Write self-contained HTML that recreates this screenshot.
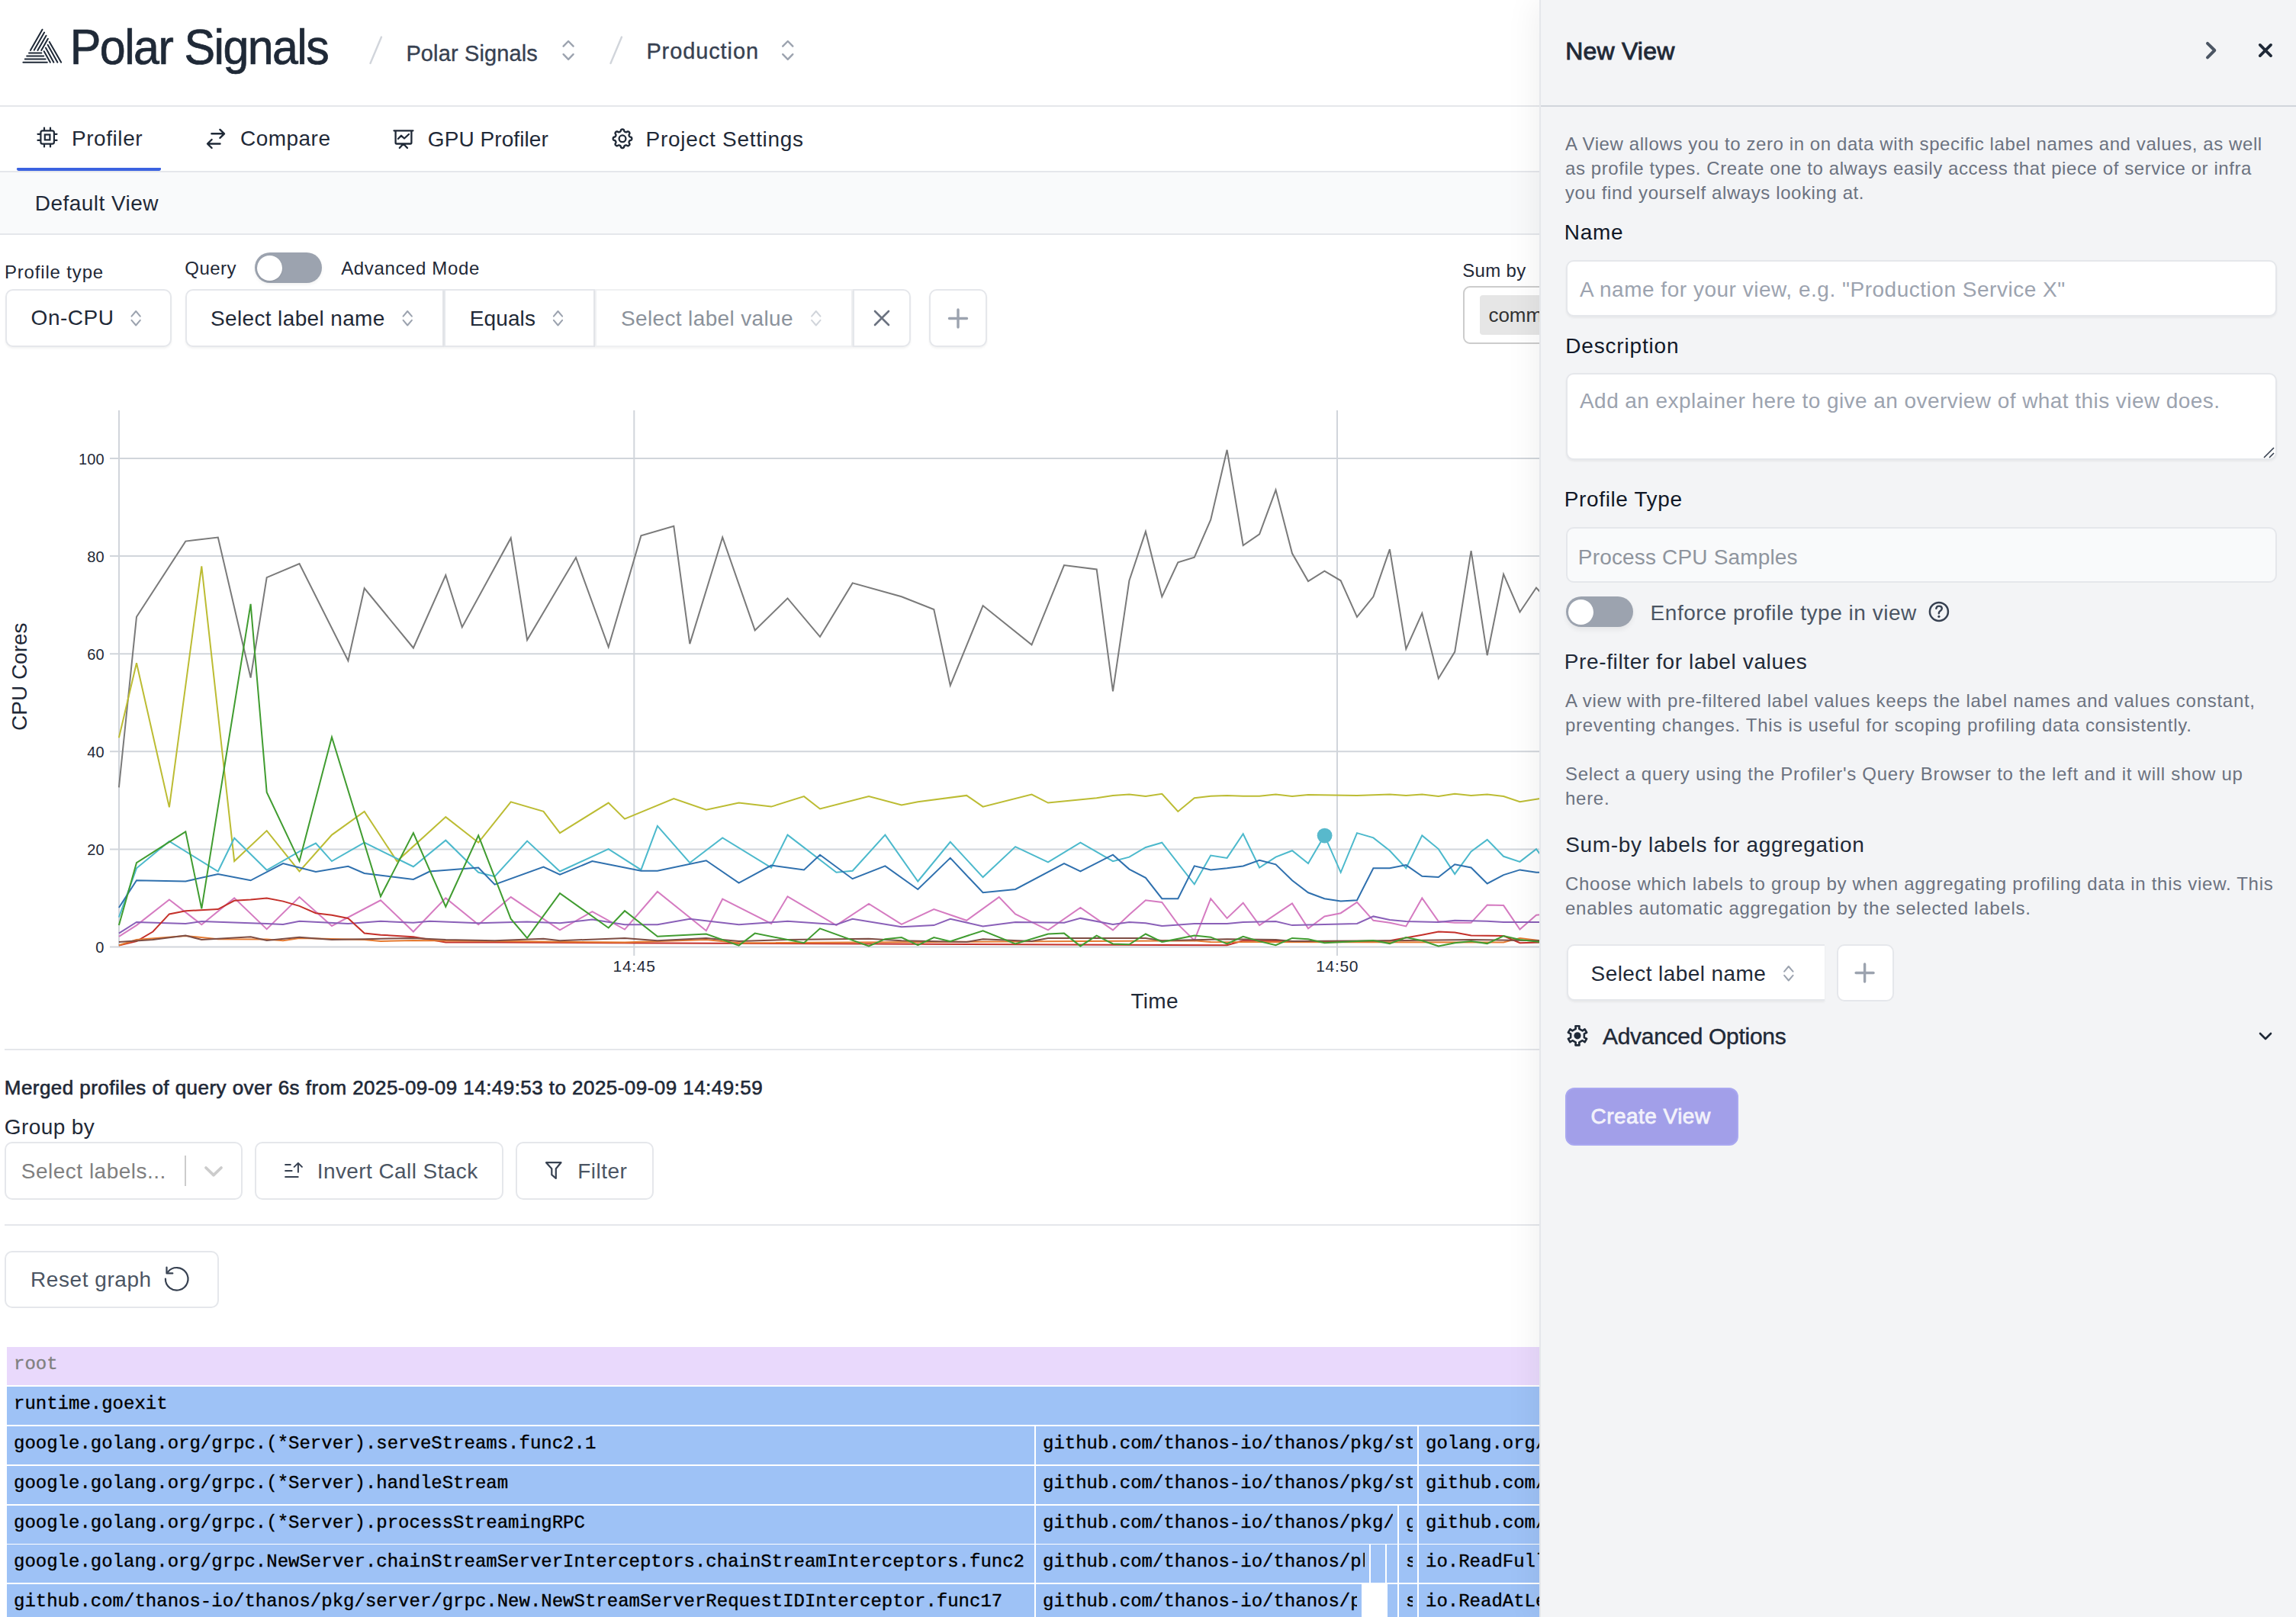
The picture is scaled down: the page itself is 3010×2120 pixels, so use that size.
<!DOCTYPE html>
<html><head><meta charset="utf-8">
<style>
html,body{margin:0;padding:0;}
body{width:3010px;height:2120px;position:relative;overflow:hidden;background:#fff;font-family:"Liberation Sans",sans-serif;color:#1f2937;}
.a{position:absolute;}
.t{position:absolute;white-space:nowrap;line-height:1;}
.bx{position:absolute;box-sizing:border-box;background:#fff;}
.fr{position:absolute;box-sizing:border-box;overflow:hidden;white-space:nowrap;font-family:"Liberation Mono",monospace;font-size:24px;line-height:45px;color:#000;padding-left:11px;}
svg{position:absolute;left:0;top:0;overflow:visible;}
</style></head><body>
<div id="main" class="a" style="left:0;top:0;width:2020px;height:2120px;overflow:hidden">
<div class="a" style="left:0px;top:138px;width:2020px;height:2px;background:#e5e7eb"></div>
<div class="t" style="left:91.8px;top:32.9px;font-size:61px;color:#1f2937;letter-spacing:-1.62px;-webkit-text-stroke:0.7px #1f2937;transform:scaleY(1.055);transform-origin:0 51.6px;">Polar Signals</div>
<div class="t" style="left:532.4px;top:55.6px;font-size:29px;color:#374151;letter-spacing:0.13px;-webkit-text-stroke:0.35px #374151;">Polar Signals</div>
<div class="t" style="left:847.4px;top:53.2px;font-size:29px;color:#374151;letter-spacing:0.89px;-webkit-text-stroke:0.35px #374151;">Production</div>
<div class="a" style="left:0px;top:224px;width:2020px;height:2px;background:#e5e7eb"></div>
<div class="a" style="left:22px;top:220px;width:189px;height:4px;background:#3b62e0;border-radius:2px 1px 4px 4px"></div>
<div class="t" style="left:94.0px;top:167.8px;font-size:28px;color:#1f2937;letter-spacing:0.56px;">Profiler</div>
<div class="t" style="left:315.0px;top:167.8px;font-size:28px;color:#1f2937;letter-spacing:0.47px;">Compare</div>
<div class="t" style="left:560.8px;top:169.1px;font-size:28px;color:#1f2937;letter-spacing:0.07px;">GPU Profiler</div>
<div class="t" style="left:846.6px;top:169.1px;font-size:28px;color:#1f2937;letter-spacing:0.69px;">Project Settings</div>
<div class="a" style="left:0px;top:226px;width:2020px;height:80px;background:#f9fafb"></div>
<div class="a" style="left:0px;top:306px;width:2020px;height:2px;background:#e5e7eb"></div>
<div class="t" style="left:45.8px;top:253.0px;font-size:28px;color:#1f2937;letter-spacing:0.45px;">Default View</div>
<div class="t" style="left:5.9px;top:345.3px;font-size:24px;color:#1f2937;letter-spacing:0.84px;">Profile type</div>
<div class="t" style="left:242.3px;top:339.5px;font-size:24px;color:#1f2937;letter-spacing:0.47px;">Query</div>
<div class="t" style="left:447.2px;top:340.2px;font-size:24px;color:#1f2937;letter-spacing:0.64px;">Advanced Mode</div>
<div class="a" style="left:334px;top:331px;width:88px;height:40px;background:#9ca3af;border-radius:20px;box-shadow:0 2px 4px rgba(0,0,0,0.06)"></div>
<div class="a" style="left:337px;top:334.5px;width:33px;height:33px;background:#fff;border-radius:50%;box-shadow:0 1px 2px rgba(0,0,0,0.1)"></div>
<div class="bx" style="left:7px;top:379px;width:218px;height:76px;border:2px solid #e5e7eb;border-radius:10px;box-shadow:0 2px 3px rgba(0,0,0,0.05);"></div>
<div class="bx" style="left:243px;top:379px;width:339px;height:76px;border:2px solid #e5e7eb;border-radius:10px 0 0 10px;box-shadow:0 2px 3px rgba(0,0,0,0.05);"></div>
<div class="bx" style="left:582px;top:379px;width:198px;height:76px;border:2px solid #e5e7eb;box-shadow:0 2px 3px rgba(0,0,0,0.05);"></div>
<div class="bx" style="left:780px;top:379px;width:338px;height:76px;border:2px solid #eff0f2;box-shadow:0 2px 3px rgba(0,0,0,0.05);"></div>
<div class="bx" style="left:1118px;top:379px;width:76px;height:76px;border:2px solid #e5e7eb;border-radius:0 10px 10px 0;box-shadow:0 2px 3px rgba(0,0,0,0.05);"></div>
<div class="bx" style="left:1218px;top:379px;width:76px;height:76px;border:2px solid #e5e7eb;border-radius:10px;box-shadow:0 2px 3px rgba(0,0,0,0.05);"></div>
<div class="t" style="left:40.6px;top:402.6px;font-size:28px;color:#1f2937;letter-spacing:0.52px;">On-CPU</div>
<div class="t" style="left:276.0px;top:403.6px;font-size:28px;color:#1f2937;letter-spacing:0.36px;">Select label name</div>
<div class="t" style="left:615.8px;top:403.6px;font-size:28px;color:#1f2937;letter-spacing:0.1px;">Equals</div>
<div class="t" style="left:814.0px;top:403.6px;font-size:28px;color:#8b929b;letter-spacing:0.36px;">Select label value</div>
<div class="t" style="left:1917.3px;top:343.4px;font-size:24px;color:#1f2937;letter-spacing:0.3px;">Sum by</div>
<div class="bx" style="left:1918px;top:375px;width:200px;height:76px;border:2px solid #cccccc;border-radius:9px;"></div>
<div class="a" style="left:1940px;top:387px;width:150px;height:52px;background:#e6e6e6;border-radius:4px"></div>
<div class="t" style="left:1951.4px;top:400.0px;font-size:26px;color:#333333;">comm</div>
<svg width="2020" height="2120" viewBox="0 0 2020 2120">
<line x1="144" y1="1241.5" x2="2020" y2="1241.5" stroke="#d1d5db" stroke-width="2"/>
<line x1="144" y1="1113.4" x2="2020" y2="1113.4" stroke="#d1d5db" stroke-width="2"/>
<line x1="144" y1="985.3" x2="2020" y2="985.3" stroke="#d1d5db" stroke-width="2"/>
<line x1="144" y1="857.2" x2="2020" y2="857.2" stroke="#d1d5db" stroke-width="2"/>
<line x1="144" y1="729.1" x2="2020" y2="729.1" stroke="#d1d5db" stroke-width="2"/>
<line x1="144" y1="601.0" x2="2020" y2="601.0" stroke="#d1d5db" stroke-width="2"/>
<line x1="156" y1="538" x2="156" y2="1242" stroke="#d1d5db" stroke-width="2"/>
<line x1="831.3" y1="538" x2="831.3" y2="1253" stroke="#d1d5db" stroke-width="2"/>
<line x1="1753" y1="538" x2="1753" y2="1253" stroke="#d1d5db" stroke-width="2"/>
<path d="M155.9,1032.4 L179.0,808.8 L243.3,709.6 L285.8,704.5 L328.6,888.6 L349.7,757.1 L392.5,739.0 L456.4,866.3 L477.7,771.3 L541.9,849.5 L584.3,754.1 L605.8,822.2 L669.7,705.4 L691.1,839.0 L755.0,731.0 L797.7,848.3 L840.4,702.4 L883.3,689.8 L904.3,844.1 L947.2,704.5 L989.7,826.4 L1032.5,784.4 L1075.0,834.8 L1117.7,764.4 L1181.9,782.3 L1224.3,799.1 L1245.8,898.7 L1288.6,794.0 L1352.5,845.3 L1395.0,741.1 L1437.7,746.5 L1459.0,906.3 L1480.4,761.3 L1501.9,696.9 L1523.3,782.3 L1544.3,737.3 L1565.8,730.6 L1587.2,681.4 L1608.6,589.8 L1629.7,715.0 L1651.1,700.3 L1672.5,642.3 L1694.0,725.5 L1715.0,762.1 L1736.4,748.6 L1757.7,761.3 L1779.0,808.8 L1800.4,782.3 L1821.9,720.1 L1843.3,850.8 L1864.3,804.1 L1885.8,889.5 L1907.2,854.6 L1928.6,722.2 L1949.7,859.2 L1971.1,752.8 L1992.5,802.5 L2014.0,770.5 L2019.0,776.0" fill="none" stroke="#7a7a7a" stroke-width="2.0" stroke-linejoin="miter"/>
<path d="M155.9,967.2 L179.0,869.3 L221.9,1058.4 L264.3,742.3 L307.2,1129.1 L349.7,1089.1 L392.5,1142.5 L435.0,1094.6 L477.7,1063.9 L520.4,1129.1 L584.3,1071.1 L627.2,1104.7 L669.7,1051.3 L712.5,1063.9 L734.0,1092.1 L797.7,1052.6 L819.0,1073.6 L883.3,1047.1 L925.8,1061.8 L968.6,1052.6 L1011.1,1057.6 L1054.0,1044.1 L1075.0,1060.5 L1139.0,1044.1 L1181.9,1055.5 L1203.3,1051.3 L1267.2,1042.9 L1288.6,1057.6 L1352.5,1041.6 L1374.0,1052.6 L1437.6,1046.3 L1459.0,1042.9 L1480.4,1041.6 L1501.9,1044.1 L1523.3,1040.8 L1544.3,1063.9 L1565.8,1046.3 L1587.2,1043.7 L1608.6,1042.9 L1629.7,1043.7 L1651.1,1043.7 L1672.5,1041.6 L1694.0,1044.1 L1715.0,1042.0 L1779.0,1042.9 L1821.9,1041.6 L1843.3,1042.9 L1864.3,1041.6 L1885.8,1044.1 L1907.2,1040.8 L1928.6,1042.9 L1949.7,1041.6 L1971.1,1044.1 L1992.5,1051.3 L2019.0,1047.1" fill="none" stroke="#bcbc33" stroke-width="2.0" stroke-linejoin="miter"/>
<path d="M155.9,1202.6 L179.0,1138.3 L221.9,1103.0 L285.8,1142.5 L307.2,1098.8 L349.7,1140.8 L392.5,1116.4 L414.0,1105.5 L435.0,1129.1 L477.7,1104.7 L541.9,1136.2 L584.3,1101.7 L627.2,1143.8 L648.6,1149.2 L691.1,1102.6 L734.0,1142.5 L797.7,1113.1 L840.4,1140.4 L861.9,1082.8 L904.3,1131.2 L947.2,1098.4 L1011.1,1137.5 L1032.5,1094.6 L1096.4,1143.8 L1117.7,1141.7 L1160.4,1094.6 L1203.3,1155.5 L1245.8,1103.8 L1288.6,1150.1 L1331.1,1110.1 L1374.0,1130.3 L1416.4,1104.7 L1459.0,1129.1 L1480.4,1123.6 L1501.9,1111.0 L1523.3,1104.7 L1565.8,1159.3 L1587.2,1121.5 L1608.6,1124.9 L1629.7,1093.3 L1651.1,1137.5 L1672.5,1123.6 L1694.0,1115.2 L1715.0,1132.0 L1736.4,1095.4 L1757.7,1143.8 L1779.0,1092.1 L1800.4,1098.4 L1821.9,1115.2 L1843.3,1138.3 L1864.3,1095.4 L1885.8,1113.1 L1907.2,1145.9 L1928.6,1116.4 L1949.7,1100.9 L1971.1,1122.8 L1992.5,1129.9 L2014.0,1113.1 L2019.0,1119.8" fill="none" stroke="#4cb9cc" stroke-width="2.0" stroke-linejoin="miter"/>
<path d="M155.9,1190.0 L179.0,1154.3 L243.3,1155.5 L285.8,1145.9 L328.6,1154.3 L371.1,1132.0 L414.0,1142.9 L456.4,1135.8 L477.6,1145.0 L541.9,1153.0 L563.3,1142.5 L627.2,1137.5 L648.6,1159.7 L712.5,1136.6 L734.0,1146.7 L776.4,1129.1 L840.4,1141.7 L861.9,1141.7 L925.8,1128.2 L968.6,1157.6 L1011.1,1134.5 L1054.0,1140.4 L1075.0,1120.7 L1117.6,1152.2 L1160.4,1135.4 L1203.3,1166.0 L1245.8,1124.9 L1288.6,1170.3 L1331.1,1166.0 L1395.0,1132.0 L1416.4,1142.5 L1459.0,1120.7 L1480.4,1139.6 L1501.9,1150.9 L1523.3,1178.2 L1544.3,1178.2 L1565.8,1135.4 L1587.2,1140.4 L1608.6,1138.3 L1629.7,1135.4 L1651.1,1127.8 L1672.5,1133.3 L1694.0,1154.3 L1715.0,1170.3 L1736.4,1178.2 L1757.6,1181.6 L1779.0,1180.3 L1800.4,1138.3 L1821.9,1138.3 L1843.3,1134.1 L1864.3,1148.8 L1885.8,1150.1 L1907.2,1133.3 L1928.6,1137.5 L1949.7,1158.5 L1971.1,1147.1 L1992.5,1140.4 L2014.0,1143.8 L2019.0,1143.8" fill="none" stroke="#2f70ae" stroke-width="2.0" stroke-linejoin="miter"/>
<path d="M155.9,1227.8 L179.0,1213.1 L221.9,1179.5 L264.3,1212.3 L307.2,1177.4 L349.7,1218.2 L392.5,1176.1 L435.0,1214.0 L499.0,1180.3 L541.9,1221.5 L584.3,1177.4 L627.2,1212.3 L669.7,1176.1 L734.0,1219.4 L776.4,1195.1 L819.0,1218.6 L861.9,1169.0 L925.8,1220.3 L947.2,1178.7 L1011.1,1211.0 L1032.5,1175.3 L1096.4,1213.1 L1139.0,1185.0 L1181.9,1211.9 L1224.3,1192.1 L1267.2,1206.8 L1309.7,1176.1 L1331.1,1198.4 L1374.0,1219.4 L1416.4,1190.0 L1459.0,1219.4 L1480.4,1199.3 L1501.9,1180.3 L1523.3,1182.9 L1544.3,1211.9 L1565.8,1232.9 L1587.2,1178.2 L1608.6,1203.9 L1629.7,1183.7 L1651.1,1213.1 L1694.0,1184.5 L1715.0,1217.3 L1736.4,1201.4 L1757.6,1197.2 L1779.0,1182.9 L1800.4,1206.8 L1821.9,1209.8 L1843.3,1214.4 L1864.3,1177.4 L1885.8,1208.1 L1907.2,1209.8 L1928.6,1209.8 L1949.7,1186.6 L1971.1,1187.1 L1992.5,1218.6 L2014.0,1199.7 L2019.0,1199.3" fill="none" stroke="#d57bc1" stroke-width="2.0" stroke-linejoin="miter"/>
<path d="M155.9,1223.6 L179.0,1208.9 L243.3,1211.0 L264.3,1208.1 L349.7,1211.0 L371.1,1211.9 L392.5,1207.7 L456.4,1211.0 L499.0,1207.7 L541.9,1209.8 L563.3,1207.7 L627.2,1210.2 L691.1,1208.5 L734.0,1210.2 L776.4,1205.6 L819.0,1212.3 L861.9,1212.3 L904.3,1204.7 L968.6,1212.3 L1032.5,1207.7 L1096.4,1212.3 L1117.6,1204.7 L1181.9,1215.2 L1224.3,1213.1 L1245.8,1204.7 L1288.6,1214.4 L1331.1,1208.9 L1395.0,1209.8 L1416.4,1203.9 L1459.0,1211.9 L1480.4,1208.9 L1501.9,1210.2 L1523.3,1214.0 L1565.8,1211.0 L1608.6,1211.0 L1629.7,1208.9 L1672.5,1208.1 L1694.0,1213.1 L1736.4,1211.9 L1779.0,1211.0 L1800.4,1201.4 L1821.9,1206.0 L1843.3,1208.1 L1885.8,1208.9 L1907.2,1206.8 L1949.7,1207.7 L1971.1,1208.9 L2019.0,1208.9" fill="none" stroke="#8a60b8" stroke-width="2.0" stroke-linejoin="miter"/>
<path d="M155.9,1239.6 L179.0,1234.1 L200.4,1221.5 L221.9,1198.4 L243.3,1194.2 L285.8,1192.1 L307.2,1180.8 L328.6,1179.5 L349.7,1177.4 L371.1,1181.6 L392.5,1187.9 L414.0,1197.2 L435.0,1199.7 L456.4,1203.9 L477.7,1223.6 L499.0,1225.7 L541.9,1228.3 L584.3,1235.4 L648.6,1235.4 L797.9,1236.2 L1608.6,1239.2 L1629.7,1233.3 L1779.0,1235.0 L1821.9,1233.3 L1864.3,1225.7 L1885.8,1221.5 L1907.2,1222.4 L1928.6,1226.6 L1971.1,1227.0 L1992.5,1236.2 L2019.0,1235.4" fill="none" stroke="#c4302a" stroke-width="2.0" stroke-linejoin="miter"/>
<path d="M155.9,1239.2 L179.0,1232.0 L243.3,1227.0 L285.8,1231.2 L349.7,1231.6 L371.1,1233.3 L392.5,1229.9 L477.6,1232.0 L499.0,1234.1 L541.9,1232.9 L819.0,1235.4 L925.8,1232.0 L968.6,1236.2 L1565.8,1233.3 L1587.2,1235.0 L1971.1,1235.4 L1992.5,1229.9 L2019.0,1233.3" fill="none" stroke="#e67a30" stroke-width="2.0" stroke-linejoin="miter"/>
<path d="M155.9,1235.0 L200.4,1232.0 L243.3,1226.6 L264.3,1232.0 L328.6,1228.3 L349.7,1232.9 L392.5,1228.7 L435.0,1232.0 L477.6,1231.2 L541.9,1229.9 L584.3,1232.0 L648.6,1233.3 L712.5,1230.8 L734.0,1233.3 L819.0,1229.9 L861.9,1233.3 L925.8,1229.9 L968.6,1234.1 L1032.5,1232.0 L1139.0,1230.8 L1181.9,1233.3 L1267.2,1235.0 L1288.6,1231.2 L1352.5,1234.1 L1374.0,1229.9 L1501.9,1229.9 L1523.3,1233.3 L1608.6,1231.2 L1672.5,1232.0 L1694.0,1234.1 L1821.9,1233.3 L1928.6,1232.0 L2019.0,1233.3" fill="none" stroke="#7d4d43" stroke-width="2.0" stroke-linejoin="miter"/>
<path d="M155.9,1213.1 L179.0,1131.2 L221.9,1103.8 L243.3,1090.4 L264.3,1191.3 L328.6,791.9 L349.7,1038.7 L392.5,1129.1 L435.0,966.4 L499.0,1175.3 L541.9,1092.1 L584.3,1188.7 L627.2,1095.4 L669.7,1204.7 L691.1,1229.9 L734.0,1171.1 L797.7,1216.5 L819.0,1194.2 L861.9,1227.8 L925.8,1224.5 L968.6,1239.6 L989.7,1223.6 L1054.0,1236.2 L1075.0,1217.3 L1139.0,1240.4 L1160.4,1231.2 L1181.9,1229.1 L1203.3,1239.2 L1224.3,1229.1 L1245.8,1234.1 L1288.6,1220.3 L1331.1,1237.5 L1374.0,1224.5 L1395.0,1223.6 L1416.4,1240.4 L1437.6,1226.6 L1459.0,1237.5 L1480.4,1238.3 L1501.9,1224.5 L1523.3,1235.0 L1565.8,1226.6 L1587.2,1228.7 L1608.6,1237.5 L1629.7,1227.8 L1651.1,1234.1 L1672.5,1239.2 L1694.0,1229.9 L1715.0,1231.2 L1736.4,1236.2 L1779.0,1234.1 L1800.4,1232.9 L1821.9,1237.1 L1843.3,1229.1 L1864.3,1233.3 L1885.8,1240.4 L1907.2,1236.2 L1928.6,1234.1 L1949.7,1237.1 L1971.1,1227.0 L1992.5,1232.0 L2019.0,1235.0" fill="none" stroke="#409c30" stroke-width="2.0" stroke-linejoin="miter"/><circle cx="1736.6" cy="1095.6" r="9.9" fill="#58b9cc"/>
</svg>
<div class="t" style="left:125.3px;top:1232.0px;font-size:20px;line-height:20px;color:#1f2937;letter-spacing:0.1px">0</div>
<div class="t" style="left:114.2px;top:1103.9px;font-size:20px;line-height:20px;color:#1f2937;letter-spacing:0.1px">20</div>
<div class="t" style="left:114.2px;top:975.8px;font-size:20px;line-height:20px;color:#1f2937;letter-spacing:0.1px">40</div>
<div class="t" style="left:114.2px;top:847.7px;font-size:20px;line-height:20px;color:#1f2937;letter-spacing:0.1px">60</div>
<div class="t" style="left:114.2px;top:719.6px;font-size:20px;line-height:20px;color:#1f2937;letter-spacing:0.1px">80</div>
<div class="t" style="left:103.0px;top:591.5px;font-size:20px;line-height:20px;color:#1f2937;letter-spacing:0.1px">100</div>
<div class="t" style="left:803.6px;top:1255.9px;font-size:21px;color:#1f2937;letter-spacing:0.67px;">14:45</div>
<div class="t" style="left:1725.2px;top:1255.9px;font-size:21px;color:#1f2937;letter-spacing:0.67px;">14:50</div>
<div class="t" style="left:1482.4px;top:1298.9px;font-size:28px;color:#1f2937;letter-spacing:0.33px;">Time</div>
<div class="t" style="left:12px;top:888px;font-size:28px;transform-origin:0 0;transform:rotate(-90deg) translate(-70px,0);color:#1f2937">CPU Cores</div>
<div class="a" style="left:6px;top:1375px;width:2014px;height:2px;background:#e5e7eb"></div>
<div class="t" style="left:5.8px;top:1412.6px;font-size:26px;color:#1f2937;letter-spacing:0.45px;-webkit-text-stroke:0.6px #1f2937;">Merged profiles of query over 6s from 2025-09-09 14:49:53 to 2025-09-09 14:49:59</div>
<div class="t" style="left:5.8px;top:1464.3px;font-size:28px;color:#1f2937;letter-spacing:0.4px;">Group by</div>
<div class="bx" style="left:6px;top:1497px;width:312px;height:76px;border:2px solid #e5e7eb;border-radius:10px;"></div>
<div class="a" style="left:242px;top:1515px;width:2px;height:40px;background:#cccccc"></div>
<div class="t" style="left:27.8px;top:1521.8px;font-size:28px;color:#808080;letter-spacing:0.5px;">Select labels...</div>
<div class="bx" style="left:334px;top:1497px;width:326px;height:76px;border:2px solid #e5e7eb;border-radius:10px;"></div>
<div class="t" style="left:415.7px;top:1521.5px;font-size:28px;color:#4b5563;letter-spacing:0.42px;">Invert Call Stack</div>
<div class="bx" style="left:676px;top:1497px;width:181px;height:76px;border:2px solid #e5e7eb;border-radius:10px;"></div>
<div class="t" style="left:757.3px;top:1521.5px;font-size:28px;color:#4b5563;letter-spacing:0.46px;">Filter</div>
<div class="a" style="left:6px;top:1605px;width:2014px;height:2px;background:#e5e7eb"></div>
<div class="bx" style="left:6px;top:1640px;width:281px;height:75px;border:2px solid #e5e7eb;border-radius:10px;"></div>
<div class="t" style="left:40.1px;top:1664.1px;font-size:28px;color:#4b5563;letter-spacing:0.55px;">Reset graph</div>
<svg width="2020" height="2120" viewBox="0 0 2020 2120">
<line x1="39.9" y1="65.9" x2="55.5" y2="38.7" stroke="#1f2937" stroke-width="2" stroke-linecap="round"/>
<line x1="44.7" y1="65.7" x2="58.1" y2="42.6" stroke="#1f2937" stroke-width="2" stroke-linecap="round"/>
<line x1="49.4" y1="65.9" x2="60.5" y2="46.7" stroke="#1f2937" stroke-width="2" stroke-linecap="round"/>
<line x1="54.2" y1="65.9" x2="62.9" y2="50.8" stroke="#1f2937" stroke-width="2" stroke-linecap="round"/>
<line x1="64.8" y1="54.9" x2="80.2" y2="81.7" stroke="#1f2937" stroke-width="2" stroke-linecap="round"/>
<line x1="62.6" y1="58.8" x2="75.4" y2="81.7" stroke="#1f2937" stroke-width="2" stroke-linecap="round"/>
<line x1="60" y1="62.7" x2="70.4" y2="81.7" stroke="#1f2937" stroke-width="2" stroke-linecap="round"/>
<line x1="57.7" y1="67.2" x2="65.9" y2="81.7" stroke="#1f2937" stroke-width="2" stroke-linecap="round"/>
<line x1="38" y1="69.4" x2="54.4" y2="69.4" stroke="#1f2937" stroke-width="2" stroke-linecap="round"/>
<line x1="35.2" y1="73.5" x2="57.2" y2="73.5" stroke="#1f2937" stroke-width="2" stroke-linecap="round"/>
<line x1="32.8" y1="77.6" x2="59.6" y2="77.6" stroke="#1f2937" stroke-width="2" stroke-linecap="round"/>
<line x1="30.4" y1="81.7" x2="61.8" y2="81.7" stroke="#1f2937" stroke-width="2" stroke-linecap="round"/>
<line x1="485.5" y1="83" x2="500" y2="48.5" stroke="#d1d5db" stroke-width="2.4" stroke-linecap="round"/>
<line x1="800.5" y1="83" x2="815" y2="48.5" stroke="#d1d5db" stroke-width="2.4" stroke-linecap="round"/>
<path d="M738.6,60.7 L745.1,54.0 L751.6,60.7 M738.6,71.2 L745.1,77.9 L751.6,71.2" fill="none" stroke="#9ca3af" stroke-width="2.4" stroke-linecap="round" stroke-linejoin="round"/>
<path d="M1026.2,60.7 L1032.8,54.0 L1039.3,60.7 M1026.2,71.2 L1032.8,77.9 L1039.3,71.2" fill="none" stroke="#9ca3af" stroke-width="2.4" stroke-linecap="round" stroke-linejoin="round"/>
<rect x="53.4" y="171.4" width="17.5" height="17.3" rx="2.5" fill="none" stroke="#1f2937" stroke-width="2.2"/>
<rect x="58.8" y="176.5" width="6.6" height="6.9" fill="none" stroke="#1f2937" stroke-width="2.2"/>
<path d="M58,167.5 V171 M66,167.5 V171 M58,189 V192.5 M66,189 V192.5 M49.5,175.8 H53 M49.5,183.9 H53 M71,175.8 H74.5 M71,183.9 H74.5" stroke="#1f2937" stroke-width="2.2" stroke-linecap="round"/>
<path d="M277.4,175.3 H293.5 M288.4,169.9 L294,175.3 L288.4,180.8 M288.5,188.5 H272.5 M277.6,183 L272,188.5 L277.6,194" fill="none" stroke="#1f2937" stroke-width="2.4" stroke-linecap="round" stroke-linejoin="round"/>
<path d="M516.5,171.3 H541.5 M518.6,171.3 V187 Q518.6,188.5 520,188.5 H538 Q539.4,188.5 539.4,187 V171.3 M521.9,182 L526,177.8 L530,181.5 L536,176 M528.8,188.5 L523.8,194 M528.8,188.5 L534,194" fill="none" stroke="#1f2937" stroke-width="2.3" stroke-linecap="round" stroke-linejoin="round"/>
<path d="M816.00,169.55 L816.32,169.56 L816.64,169.59 L816.96,169.66 L817.26,169.78 L817.56,169.98 L817.82,170.32 L818.03,170.82 L818.21,171.40 L818.38,171.90 L818.56,172.26 L818.76,172.49 L818.97,172.65 L819.20,172.77 L819.42,172.88 L819.65,172.98 L819.89,173.07 L820.12,173.16 L820.37,173.23 L820.63,173.27 L820.94,173.24 L821.32,173.12 L821.79,172.88 L822.32,172.60 L822.83,172.40 L823.26,172.34 L823.61,172.40 L823.91,172.54 L824.18,172.72 L824.43,172.92 L824.66,173.14 L824.88,173.37 L825.08,173.62 L825.26,173.89 L825.40,174.19 L825.46,174.54 L825.40,174.97 L825.20,175.48 L824.92,176.01 L824.68,176.48 L824.56,176.86 L824.53,177.17 L824.57,177.43 L824.64,177.68 L824.73,177.91 L824.82,178.15 L824.92,178.38 L825.03,178.60 L825.15,178.83 L825.31,179.04 L825.54,179.24 L825.90,179.42 L826.40,179.59 L826.98,179.77 L827.48,179.98 L827.82,180.24 L828.02,180.54 L828.14,180.84 L828.21,181.16 L828.24,181.48 L828.25,181.80 L828.24,182.12 L828.21,182.44 L828.14,182.76 L828.02,183.06 L827.82,183.36 L827.48,183.62 L826.98,183.83 L826.40,184.01 L825.90,184.18 L825.54,184.36 L825.31,184.56 L825.15,184.77 L825.03,185.00 L824.92,185.22 L824.82,185.45 L824.73,185.69 L824.64,185.92 L824.57,186.17 L824.53,186.43 L824.56,186.74 L824.68,187.12 L824.92,187.59 L825.20,188.12 L825.40,188.63 L825.46,189.06 L825.40,189.41 L825.26,189.71 L825.08,189.98 L824.88,190.23 L824.66,190.46 L824.43,190.68 L824.18,190.88 L823.91,191.06 L823.61,191.20 L823.26,191.26 L822.83,191.20 L822.32,191.00 L821.79,190.72 L821.32,190.48 L820.94,190.36 L820.63,190.33 L820.37,190.37 L820.12,190.44 L819.89,190.53 L819.65,190.62 L819.42,190.72 L819.20,190.83 L818.97,190.95 L818.76,191.11 L818.56,191.34 L818.38,191.70 L818.21,192.20 L818.03,192.78 L817.82,193.28 L817.56,193.62 L817.26,193.82 L816.96,193.94 L816.64,194.01 L816.32,194.04 L816.00,194.05 L815.68,194.04 L815.36,194.01 L815.04,193.94 L814.74,193.82 L814.44,193.62 L814.18,193.28 L813.97,192.78 L813.79,192.20 L813.62,191.70 L813.44,191.34 L813.24,191.11 L813.03,190.95 L812.80,190.83 L812.58,190.72 L812.35,190.62 L812.11,190.53 L811.88,190.44 L811.63,190.37 L811.37,190.33 L811.06,190.36 L810.68,190.48 L810.21,190.72 L809.68,191.00 L809.17,191.20 L808.74,191.26 L808.39,191.20 L808.09,191.06 L807.82,190.88 L807.57,190.68 L807.34,190.46 L807.12,190.23 L806.92,189.98 L806.74,189.71 L806.60,189.41 L806.54,189.06 L806.60,188.63 L806.80,188.12 L807.08,187.59 L807.32,187.12 L807.44,186.74 L807.47,186.43 L807.43,186.17 L807.36,185.92 L807.27,185.69 L807.18,185.45 L807.08,185.22 L806.97,185.00 L806.85,184.77 L806.69,184.56 L806.46,184.36 L806.10,184.18 L805.60,184.01 L805.02,183.83 L804.52,183.62 L804.18,183.36 L803.98,183.06 L803.86,182.76 L803.79,182.44 L803.76,182.12 L803.75,181.80 L803.76,181.48 L803.79,181.16 L803.86,180.84 L803.98,180.54 L804.18,180.24 L804.52,179.98 L805.02,179.77 L805.60,179.59 L806.10,179.42 L806.46,179.24 L806.69,179.04 L806.85,178.83 L806.97,178.60 L807.08,178.38 L807.18,178.15 L807.27,177.91 L807.36,177.68 L807.43,177.43 L807.47,177.17 L807.44,176.86 L807.32,176.48 L807.08,176.01 L806.80,175.48 L806.60,174.97 L806.54,174.54 L806.60,174.19 L806.74,173.89 L806.92,173.62 L807.12,173.37 L807.34,173.14 L807.57,172.92 L807.82,172.72 L808.09,172.54 L808.39,172.40 L808.74,172.34 L809.17,172.40 L809.68,172.60 L810.21,172.88 L810.68,173.12 L811.06,173.24 L811.37,173.27 L811.63,173.23 L811.88,173.16 L812.11,173.07 L812.35,172.98 L812.58,172.88 L812.80,172.77 L813.03,172.65 L813.24,172.49 L813.44,172.26 L813.62,171.90 L813.79,171.40 L813.97,170.82 L814.18,170.32 L814.44,169.98 L814.74,169.78 L815.04,169.66 L815.36,169.59 L815.68,169.56 Z" fill="none" stroke="#1f2937" stroke-width="2.4" stroke-linejoin="round"/>
<circle cx="816" cy="181.8" r="4.4" fill="none" stroke="#1f2937" stroke-width="2.3"/>
<path d="M172.5,414.7 L178.2,408.0 L183.8,414.7 M172.5,419.8 L178.2,426.5 L183.8,419.8" fill="none" stroke="#9ca3af" stroke-width="2.0" stroke-linecap="round" stroke-linejoin="round"/>
<path d="M528.6,414.7 L534.2,408.0 L539.9,414.7 M528.6,419.8 L534.2,426.5 L539.9,419.8" fill="none" stroke="#9ca3af" stroke-width="2.0" stroke-linecap="round" stroke-linejoin="round"/>
<path d="M725.9,414.7 L731.5,408.0 L737.1,414.7 M725.9,419.8 L731.5,426.5 L737.1,419.8" fill="none" stroke="#9ca3af" stroke-width="2.0" stroke-linecap="round" stroke-linejoin="round"/>
<path d="M1064.1,414.7 L1069.8,408.0 L1075.5,414.7 M1064.1,419.8 L1069.8,426.5 L1075.5,419.8" fill="none" stroke="#d1d5db" stroke-width="2.0" stroke-linecap="round" stroke-linejoin="round"/>
<path d="M1147,408 L1165,426 M1165,408 L1147,426" stroke="#6b7280" stroke-width="2.6" stroke-linecap="round"/>
<path d="M1256,406 V429 M1244.5,417.5 H1267.5" stroke="#9ca3af" stroke-width="3.4" stroke-linecap="round"/>
<path d="M270,1531 L280,1540.7 L290,1531" fill="none" stroke="#cccccc" stroke-width="3.8" stroke-linecap="round" stroke-linejoin="round"/>
<path d="M374.1,1527 H380.8 M374.1,1535 H382.6 M374.1,1543 H390.7 M390.9,1536.8 V1525.5 M385.7,1529.9 L390.9,1524.9 L395.9,1529.9" fill="none" stroke="#374151" stroke-width="2" stroke-linecap="round" stroke-linejoin="round"/>
<path d="M716,1524.2 H735.5 L728.8,1532.3 V1545 L723.3,1540.2 V1532.3 Z" fill="none" stroke="#374151" stroke-width="2.2" stroke-linejoin="round"/>
<path d="M216.9,1676.5 A14.8,14.8 0 1 0 220.2,1667.5" fill="none" stroke="#374151" stroke-width="2.2" stroke-linecap="round"/>
<path d="M218.5,1661.6 V1669.4 H226.3" fill="none" stroke="#374151" stroke-width="2.2" stroke-linecap="round" stroke-linejoin="round"/>
</svg>
<div class="fr" style="left:9px;top:1766px;width:2011px;height:50px;background:#e9d9fc;color:#808080;padding:0"><div style="position:absolute;left:9px;right:6px;top:0;bottom:0;overflow:hidden;-webkit-text-stroke:0.35px #808080">root</div></div>
<div class="fr" style="left:9px;top:1818px;width:2011px;height:50px;background:#9ec2f6;color:#000;padding:0"><div style="position:absolute;left:9px;right:6px;top:0;bottom:0;overflow:hidden;-webkit-text-stroke:0.35px #000">runtime.goexit</div></div>
<div class="fr" style="left:9px;top:1870px;width:1347px;height:50px;background:#9ec2f6;color:#000;padding:0"><div style="position:absolute;left:9px;right:6px;top:0;bottom:0;overflow:hidden;-webkit-text-stroke:0.35px #000">google.golang.org/grpc.(*Server).serveStreams.func2.1</div></div>
<div class="fr" style="left:9px;top:1922px;width:1347px;height:50px;background:#9ec2f6;color:#000;padding:0"><div style="position:absolute;left:9px;right:6px;top:0;bottom:0;overflow:hidden;-webkit-text-stroke:0.35px #000">google.golang.org/grpc.(*Server).handleStream</div></div>
<div class="fr" style="left:9px;top:1973.5px;width:1347px;height:50px;background:#9ec2f6;color:#000;padding:0"><div style="position:absolute;left:9px;right:6px;top:0;bottom:0;overflow:hidden;-webkit-text-stroke:0.35px #000">google.golang.org/grpc.(*Server).processStreamingRPC</div></div>
<div class="fr" style="left:9px;top:2025px;width:1347px;height:50px;background:#9ec2f6;color:#000;padding:0"><div style="position:absolute;left:9px;right:6px;top:0;bottom:0;overflow:hidden;-webkit-text-stroke:0.35px #000">google.golang.org/grpc.NewServer.chainStreamServerInterceptors.chainStreamInterceptors.func2</div></div>
<div class="fr" style="left:9px;top:2077px;width:1347px;height:50px;background:#9ec2f6;color:#000;padding:0"><div style="position:absolute;left:9px;right:6px;top:0;bottom:0;overflow:hidden;-webkit-text-stroke:0.35px #000">github.com/thanos-io/thanos/pkg/server/grpc.New.NewStreamServerRequestIDInterceptor.func17</div></div>
<div class="fr" style="left:1358px;top:1870px;width:500px;height:50px;background:#9ec2f6;color:#000;padding:0"><div style="position:absolute;left:9px;right:6px;top:0;bottom:0;overflow:hidden;-webkit-text-stroke:0.35px #000">github.com/thanos-io/thanos/pkg/store.(*ProxyStore).Series</div></div>
<div class="fr" style="left:1358px;top:1922px;width:500px;height:50px;background:#9ec2f6;color:#000;padding:0"><div style="position:absolute;left:9px;right:6px;top:0;bottom:0;overflow:hidden;-webkit-text-stroke:0.35px #000">github.com/thanos-io/thanos/pkg/store.(*ProxyStore).Series</div></div>
<div class="fr" style="left:1358px;top:1973.5px;width:474px;height:50px;background:#9ec2f6;color:#000;padding:0"><div style="position:absolute;left:9px;right:6px;top:0;bottom:0;overflow:hidden;-webkit-text-stroke:0.35px #000">github.com/thanos-io/thanos/pkg/store.(*ProxyStore).Series</div></div>
<div class="fr" style="left:1834px;top:1973.5px;width:24px;height:50px;background:#9ec2f6;color:#000;padding:0"><div style="position:absolute;left:9px;right:6px;top:0;bottom:0;overflow:hidden;-webkit-text-stroke:0.35px #000">golang</div></div>
<div class="fr" style="left:1358px;top:2025px;width:437px;height:50px;background:#9ec2f6;color:#000;padding:0"><div style="position:absolute;left:9px;right:6px;top:0;bottom:0;overflow:hidden;-webkit-text-stroke:0.35px #000">github.com/thanos-io/thanos/pkg/store.(*ProxyStore).Series</div></div>
<div class="fr" style="left:1797px;top:2025px;width:19px;height:50px;background:#9ec2f6;color:#000;padding:0"></div>
<div class="fr" style="left:1818px;top:2025px;width:14px;height:50px;background:#9ec2f6;color:#000;padding:0"></div>
<div class="fr" style="left:1834px;top:2025px;width:24px;height:50px;background:#9ec2f6;color:#000;padding:0"><div style="position:absolute;left:9px;right:6px;top:0;bottom:0;overflow:hidden;-webkit-text-stroke:0.35px #000">store</div></div>
<div class="fr" style="left:1358px;top:2077px;width:427px;height:50px;background:#9ec2f6;color:#000;padding:0"><div style="position:absolute;left:9px;right:6px;top:0;bottom:0;overflow:hidden;-webkit-text-stroke:0.35px #000">github.com/thanos-io/thanos/pkg/store.(*ProxyStore).Series</div></div>
<div class="fr" style="left:1819px;top:2077px;width:13px;height:50px;background:#9ec2f6;color:#000;padding:0"></div>
<div class="fr" style="left:1834px;top:2077px;width:24px;height:50px;background:#9ec2f6;color:#000;padding:0"><div style="position:absolute;left:9px;right:6px;top:0;bottom:0;overflow:hidden;-webkit-text-stroke:0.35px #000">store</div></div>
<div class="fr" style="left:1860px;top:1870px;width:740px;height:50px;background:#9ec2f6;color:#000;padding:0"><div style="position:absolute;left:9px;right:6px;top:0;bottom:0;overflow:hidden;-webkit-text-stroke:0.35px #000">golang.org/x/sync/errgroup.(*Group).Go.func1</div></div>
<div class="fr" style="left:1860px;top:1922px;width:740px;height:50px;background:#9ec2f6;color:#000;padding:0"><div style="position:absolute;left:9px;right:6px;top:0;bottom:0;overflow:hidden;-webkit-text-stroke:0.35px #000">github.com/thanos-io/thanos/pkg/store.func1</div></div>
<div class="fr" style="left:1860px;top:1973.5px;width:740px;height:50px;background:#9ec2f6;color:#000;padding:0"><div style="position:absolute;left:9px;right:6px;top:0;bottom:0;overflow:hidden;-webkit-text-stroke:0.35px #000">github.com/thanos-io/thanos/pkg/store.func2</div></div>
<div class="fr" style="left:1860px;top:2025px;width:740px;height:50px;background:#9ec2f6;color:#000;padding:0"><div style="position:absolute;left:9px;right:6px;top:0;bottom:0;overflow:hidden;-webkit-text-stroke:0.35px #000">io.ReadFull</div></div>
<div class="fr" style="left:1860px;top:2077px;width:740px;height:50px;background:#9ec2f6;color:#000;padding:0"><div style="position:absolute;left:9px;right:6px;top:0;bottom:0;overflow:hidden;-webkit-text-stroke:0.35px #000">io.ReadAtLeast</div></div>
</div>
<div id="panel" class="a" style="left:2018px;top:0;width:992px;height:2120px;background:#f3f4f6;box-shadow:-6px 0 40px rgba(0,0,0,0.06);">
<div class="a" style="left:0px;top:138px;width:992px;height:2px;background:#d1d5db"></div>
<div class="t" style="left:34.2px;top:50.9px;font-size:32px;color:#1f2937;letter-spacing:0.2px;-webkit-text-stroke:0.9px #1f2937;">New View</div>
<div class="a" style="left:34px;top:172.7px;width:940px;color:#6b7280;font-size:24px;line-height:32px;letter-spacing:0.59px;white-space:nowrap">A View allows you to zero in on data with specific label names and values, as well<br>as profile types. Create one to always easily access that piece of service or infra<br>you find yourself always looking at.</div>
<div class="t" style="left:32.8px;top:290.5px;font-size:28px;color:#111827;letter-spacing:0.73px;">Name</div>
<div class="bx" style="left:35px;top:341px;width:932px;height:74px;background:#fff;border:2px solid #e5e7eb;border-radius:10px;box-shadow:0 2px 3px rgba(0,0,0,0.05);"></div>
<div class="t" style="left:53.0px;top:366.3px;font-size:28px;color:#9ca3af;letter-spacing:0.52px;">A name for your view, e.g. "Production Service X"</div>
<div class="t" style="left:34.2px;top:439.6px;font-size:28px;color:#111827;letter-spacing:0.83px;">Description</div>
<div class="bx" style="left:35px;top:489px;width:932px;height:114px;background:#fff;border:2px solid #e5e7eb;border-radius:10px;box-shadow:0 2px 3px rgba(0,0,0,0.05);"></div>
<div class="t" style="left:53.0px;top:511.9px;font-size:28px;color:#9ca3af;letter-spacing:0.44px;">Add an explainer here to give an overview of what this view does.</div>
<div class="t" style="left:32.8px;top:641.3px;font-size:28px;color:#111827;letter-spacing:0.62px;">Profile Type</div>
<div class="bx" style="left:35px;top:691px;width:932px;height:73px;background:#f9fafb;border:2px solid #e5e7eb;border-radius:10px;"></div>
<div class="t" style="left:50.8px;top:716.6px;font-size:28px;color:#8f959e;letter-spacing:0.17px;">Process CPU Samples</div>
<div class="a" style="left:34.5px;top:782px;width:88px;height:40px;background:#9ca3af;border-radius:20px;box-shadow:0 4px 6px rgba(0,0,0,0.06)"></div>
<div class="a" style="left:38px;top:785.5px;width:33px;height:33px;background:#fff;border-radius:50%"></div>
<div class="t" style="left:145.6px;top:789.8px;font-size:28px;color:#4b5563;letter-spacing:0.52px;">Enforce profile type in view</div>
<div class="t" style="left:32.8px;top:853.8px;font-size:28px;color:#1f2937;letter-spacing:0.62px;">Pre-filter for label values</div>
<div class="a" style="left:34px;top:903.1px;width:940px;color:#6b7280;font-size:24px;line-height:32px;letter-spacing:0.72px;white-space:nowrap">A view with pre-filtered label values keeps the label names and values constant,<br>preventing changes. This is useful for scoping profiling data consistently.<br><br>Select a query using the Profiler's Query Browser to the left and it will show up<br>here.</div>
<div class="t" style="left:34.3px;top:1093.7px;font-size:28px;color:#1f2937;letter-spacing:0.64px;">Sum-by labels for aggregation</div>
<div class="a" style="left:34px;top:1142.7px;width:940px;color:#6b7280;font-size:24px;line-height:32px;letter-spacing:0.72px;white-space:nowrap">Choose which labels to group by when aggregating profiling data in this view. This<br>enables automatic aggregation by the selected labels.</div>
<div class="bx" style="left:35.59999999999991px;top:1238px;width:338px;height:74px;border:2px solid #e5e7eb;border-right:none;border-radius:10px 0 0 10px;box-shadow:0 2px 3px rgba(0,0,0,0.05);"></div>
<div class="t" style="left:67.6px;top:1263.0px;font-size:28px;color:#1f2937;letter-spacing:0.41px;">Select label name</div>
<div class="bx" style="left:389.6999999999998px;top:1238px;width:75px;height:75px;border:2px solid #e5e7eb;border-radius:10px;"></div>
<div class="t" style="left:83.0px;top:1344.3px;font-size:30px;color:#1f2937;letter-spacing:-0.3px;-webkit-text-stroke:0.4px #1f2937;">Advanced Options</div>
<div class="a" style="left:34px;top:1426px;width:227px;height:76px;background:#a29fe9;border-radius:12px;border:2px solid #a9a7f0;box-sizing:border-box"></div>
<div class="t" style="left:67.6px;top:1450.2px;font-size:28px;color:#f3f2fb;letter-spacing:0.45px;-webkit-text-stroke:0.8px #f3f2fb;">Create View</div>
<svg width="992" height="2120" viewBox="2018 0 992 2120" style="left:0;top:0">
<path d="M2894,56.8 L2903.3,66 L2894,75.3" fill="none" stroke="#4b5563" stroke-width="4" stroke-linecap="round" stroke-linejoin="round"/>
<path d="M2962.8,58.9 L2977,73.1 M2977,58.9 L2962.8,73.1" fill="none" stroke="#1f2937" stroke-width="3.8" stroke-linecap="round"/>
<path d="M2968,600 L2981,587 M2975,600 L2981,594" stroke="#374151" stroke-width="1.6"/>
<circle cx="2541.9" cy="801.9" r="12" fill="none" stroke="#374151" stroke-width="2.5"/>
<path d="M2538.3,797.8 C2538.6,795.6 2540,794.6 2542,794.6 C2544.3,794.6 2545.8,796 2545.8,797.8 C2545.8,799.6 2544.5,800.4 2543.2,801.3 C2542.2,802 2541.8,802.8 2541.8,804.3" fill="none" stroke="#374151" stroke-width="2.4" stroke-linecap="round"/>
<circle cx="2541.9" cy="808.3" r="1.6" fill="#374151"/>
<path d="M2339.2,1273.7 L2344.8,1267.0 L2350.5,1273.7 M2339.2,1278.8 L2344.8,1285.5 L2350.5,1278.8" fill="none" stroke="#9ca3af" stroke-width="2.0" stroke-linecap="round" stroke-linejoin="round"/>
<path d="M2444.6,1264 V1287 M2433.1,1275.5 H2456.1" stroke="#9ca3af" stroke-width="3.4" stroke-linecap="round"/>
<path d="M2070.26,1348.88 L2070.53,1345.25 L2065.47,1345.25 L2065.74,1348.88 L2061.41,1351.38 L2058.40,1349.34 L2055.87,1353.72 L2059.15,1355.30 L2059.15,1360.30 L2055.87,1361.88 L2058.40,1366.26 L2061.41,1364.22 L2065.74,1366.72 L2065.47,1370.35 L2070.53,1370.35 L2070.26,1366.72 L2074.59,1364.22 L2077.60,1366.26 L2080.13,1361.88 L2076.85,1360.30 L2076.85,1355.30 L2080.13,1353.72 L2077.60,1349.34 L2074.59,1351.38 Z" fill="none" stroke="#1f2937" stroke-width="2.6" stroke-linejoin="round"/>
<circle cx="2068" cy="1357.8" r="4.6" fill="#1f2937"/>
<path d="M2963,1355 L2970,1362 L2977,1355" fill="none" stroke="#1f2937" stroke-width="2.6" stroke-linecap="round" stroke-linejoin="round"/>
</svg>
</div>
<div class="a" style="left:2018px;top:0px;width:2px;height:2120px;background:#e5e7eb"></div>
</body></html>
